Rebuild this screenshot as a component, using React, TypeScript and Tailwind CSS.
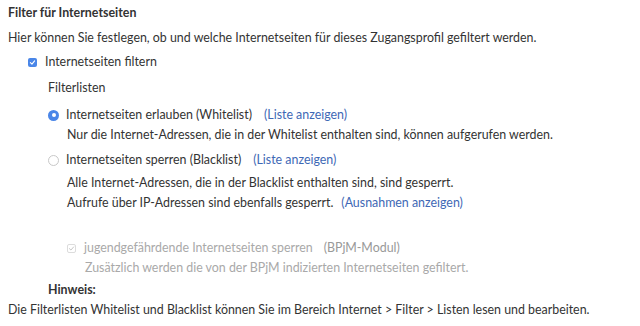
import React from "react";

function Link({ children, gap = "ml-[12px]" }: { children: React.ReactNode; gap?: string }) {
  return <a className={`${gap} text-[#3e68b5] cursor-pointer`}>{children}</a>;
}

export default function App() {
  return (
    <div
      className="w-[640px] h-[326px] bg-white text-[12.4px] text-[#333] leading-[20px] px-[8px] pt-[3px]"
      style={{ fontFamily: "Lato, 'Open Sans', sans-serif" }}
    >
      {/* Title */}
      <div className="font-bold h-[20px]">Filter für Internetseiten</div>
      <div className="mt-[5px] h-[20px]">
        Hier können Sie festlegen, ob und welche Internetseiten für dieses Zugangsprofil gefiltert werden.
      </div>

      <div className="pl-[20px]">
        <label className="mt-[4px] flex items-center h-[20px]">
          <span className="w-[9px] h-[9px] rounded-[2px] bg-[#4a86e8] flex items-center justify-center">
            <svg viewBox="0 0 10 10" className="w-[7px] h-[7px]">
              <path d="M2 5.2 L4.2 7.2 L8 2.8" fill="none" stroke="white" strokeWidth="1.6" strokeLinecap="round" strokeLinejoin="round" />
            </svg>
          </span>
          <span className="ml-[8px]">Internetseiten filtern</span>
        </label>

        <div className="pl-[20px]">
          <div className="mt-[6px] h-[20px]">Filterlisten</div>

          {/* Whitelist */}
          <div className="mt-[7px] flex items-center h-[20px]">
            <span className="w-[11px] h-[11px] rounded-full bg-[#4a86e8] flex items-center justify-center">
              <span className="w-[4px] h-[4px] rounded-full bg-white" />
            </span>
            <span className="ml-[7px]">Internetseiten erlauben (Whitelist)</span>
            <Link>(Liste anzeigen)</Link>
          </div>
          <div className="pl-[19px] h-[20px]">
            Nur die Internet-Adressen, die in der Whitelist enthalten sind, können aufgerufen werden.
          </div>

          {/* Blacklist */}
          <div className="mt-[5px] flex items-center h-[20px]">
            <span className="w-[11px] h-[11px] rounded-full border border-[#c8c8c8] bg-white" />
            <span className="ml-[7px]">Internetseiten sperren (Blacklist)</span>
            <Link>(Liste anzeigen)</Link>
          </div>
          <div className="pl-[19px]">
            <div className="mt-[3px] h-[20px]">Alle Internet-Adressen, die in der Blacklist enthalten sind, sind gesperrt.</div>
            <div className="h-[20px]">
              Aufrufe über IP-Adressen sind ebenfalls gesperrt.
              <Link gap="ml-[8px]">(Ausnahmen anzeigen)</Link>
            </div>

            <div className="mt-[25px] flex items-center h-[20px] text-[#a9a9a9]">
              <span className="w-[9px] h-[9px] rounded-[2px] border border-[#dcdcdc] flex items-center justify-center">
                <svg viewBox="0 0 10 10" className="w-[7px] h-[7px]">
                  <path d="M2 5.2 L4.2 7.2 L8 2.8" fill="none" stroke="#c4c4c4" strokeWidth="1.4" strokeLinecap="round" strokeLinejoin="round" />
                </svg>
              </span>
              <span className="ml-[8px]">jugendgefährdende Internetseiten sperren</span>
              <span className="ml-[11px] text-[#999]">(BPjM-Modul)</span>
            </div>
            <div className="pl-[18px] h-[20px] text-[#a9a9a9]">
              Zusätzlich werden die von der BPjM indizierten Internetseiten gefiltert.
            </div>
          </div>

          <div className="mt-[2px] h-[20px] font-bold">Hinweis:</div>
        </div>
      </div>
      <div className="h-[20px]">
        Die Filterlisten Whitelist und Blacklist können Sie im Bereich Internet &gt; Filter &gt; Listen lesen und bearbeiten.
      </div>
    </div>
  );
}
